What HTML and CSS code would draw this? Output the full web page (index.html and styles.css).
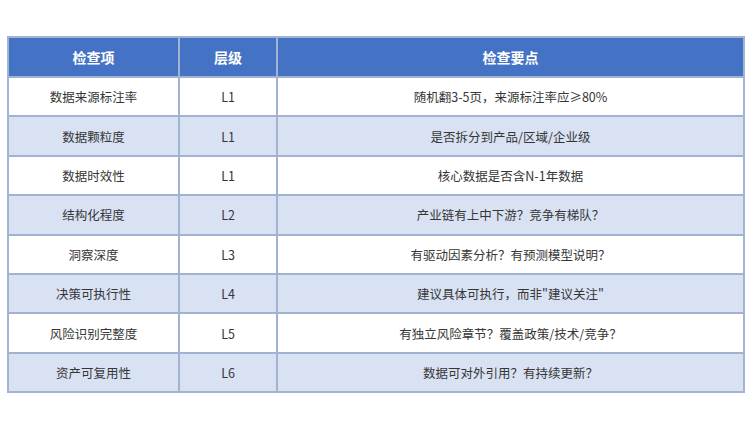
FILE: index.html
```html
<!DOCTYPE html>
<html lang="zh">
<head>
<meta charset="utf-8">
<link rel="stylesheet" href="styles.css">
</head>
<body>
<div class="page">
<table class="grid">
<colgroup><col class="c1"><col class="c2"><col class="c3"></colgroup>
<thead>
<tr><th>检查项</th><th>层级</th><th>检查要点</th></tr>
</thead>
<tbody>
<tr><td>数据来源标注率</td><td>L1</td><td>随机翻3-5页，来源标注率应≥80%</td></tr>
<tr><td>数据颗粒度</td><td>L1</td><td>是否拆分到产品/区域/企业级</td></tr>
<tr><td>数据时效性</td><td>L1</td><td>核心数据是否含N-1年数据</td></tr>
<tr><td>结构化程度</td><td>L2</td><td>产业链有上中下游？竞争有梯队？</td></tr>
<tr><td>洞察深度</td><td>L3</td><td>有驱动因素分析？有预测模型说明？</td></tr>
<tr><td>决策可执行性</td><td>L4</td><td>建议具体可执行，而非"建议关注"</td></tr>
<tr><td>风险识别完整度</td><td>L5</td><td>有独立风险章节？覆盖政策/技术/竞争？</td></tr>
<tr><td>资产可复用性</td><td>L6</td><td>数据可对外引用？有持续更新？</td></tr>
</tbody>
</table>
</div>
</body>
</html>
```
FILE: styles.css
```css
html, body { margin: 0; padding: 0; background: #fff; }
.page { padding: 36px 7px 0 7px; }
.grid {
  width: 736px;
  border-collapse: collapse;
  table-layout: fixed;
  font-family: "Noto Sans CJK SC", "Noto Sans", sans-serif;
  font-size: 12.5px;
  color: #363636;
}
.c1 { width: 171px; }
.c2 { width: 98px; }
.c3 { width: 467px; }
.grid th, .grid td {
  border: 2px solid #a2b3d2;
  text-align: center;
  vertical-align: middle;
  padding: 0;
}
.grid th {
  background: #4472c4;
  color: #fff;
  font-size: 14px;
  font-weight: 700;
  height: 38px;
}
.grid td { height: 37.4px; }
.grid tbody tr:nth-child(even) td { background: #d9e2f3; }
```
